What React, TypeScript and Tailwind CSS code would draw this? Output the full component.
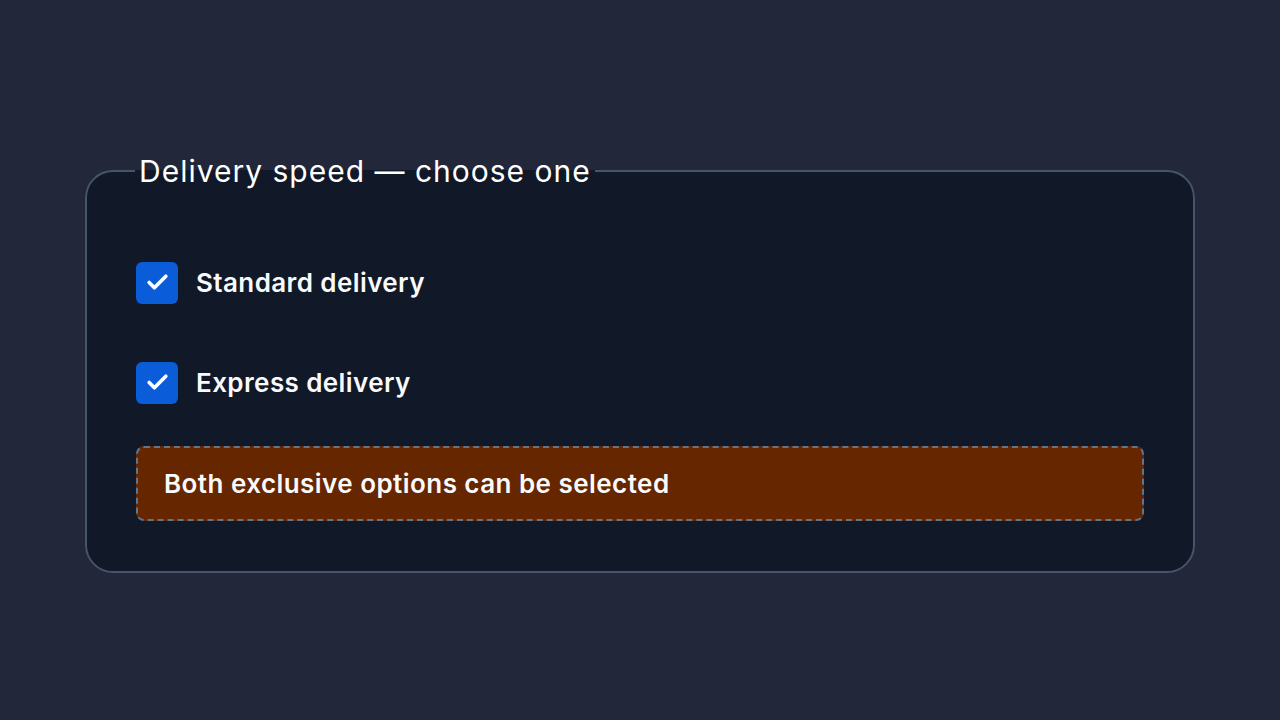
import { Check } from "lucide-react";

const options = ["Standard delivery", "Express delivery"];

const App = () => {
    return (
        <div className="min-h-screen bg-[#222839] flex items-center justify-center font-['Inter',sans-serif]">
            <fieldset className="w-[1110px] bg-[#111827] border-2 border-[#475569] rounded-[28px] px-[49px] pt-[71px] pb-[50px] mt-[3px]">
                <legend className="px-1 -ml-[1px] text-[30px] leading-[40px] tracking-[1px] text-white">Delivery speed — choose one</legend>
                <div className="flex flex-col gap-[58px]">
                    {options.map((label) => (
                        <label key={label} className="flex items-center gap-[18px]">
                            <span className="w-[42px] h-[42px] rounded-[6px] bg-[#0b5cd9] flex items-center justify-center">
                                <Check className="text-white w-[25px] h-[25px]" strokeWidth={3.5} />
                            </span>
                            <span className="text-[26px] font-semibold tracking-[0.4px] text-[#f8fafc]">{label}</span>
                        </label>
                    ))}
                </div>
                <div className="mt-[42px] h-[75px] flex items-center px-[26px] bg-[#662600] border-2 border-dashed border-[#64748b] rounded-[8px]">
                    <span className="text-[26px] font-semibold tracking-[0.45px] text-[#f8fafc]">Both exclusive options can be selected</span>
                </div>
            </fieldset>
        </div>
    )
}

export default App
